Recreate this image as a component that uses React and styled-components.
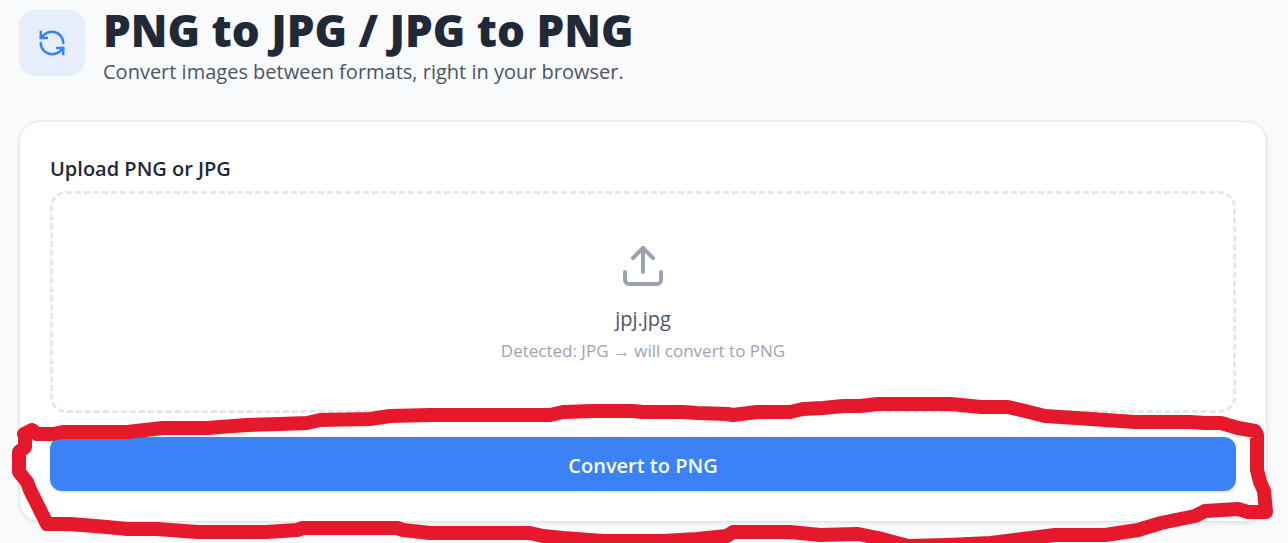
import React, { useState } from 'react'
import styled, { createGlobalStyle } from 'styled-components'
import { RefreshCcw, Upload } from 'lucide-react'

const GlobalStyle = createGlobalStyle`
    * {
        box-sizing: border-box;
    }
    body {
        margin: 0;
        background-color: #f9fafc;
        color: #1f2937;
        font-family: 'Segoe UI', 'Open Sans', 'Noto Sans', sans-serif;
        font-size: 20px;
        line-height: 32px;
    }
`
const Page = styled.main`
    position: relative;
    overflow: hidden;
    padding: 10px 21px 21px 19px;
`
const Header = styled.header`
    display: flex;
    align-items: flex-start;
    gap: 18px;
    margin-bottom: 33px;
`
const IconTile = styled.div`
    display: flex;
    align-items: center;
    justify-content: center;
    flex: none;
    width: 66px;
    height: 66px;
    border-radius: 16px;
    background-color: #e6eefb;
    color: #3b82f6;
`
const Title = styled.h1`
    margin: 0 0 6px;
    font-family: 'Segoe UI', 'Noto Sans', 'Open Sans', sans-serif;
    font-size: 44px;
    font-weight: 900;
    line-height: 40px;
`
const Subtitle = styled.p`
    margin: 0;
    color: #4b5563;
`
const Card = styled.section`
    display: flex;
    flex-direction: column;
    padding: 31px 30px 30px;
    border: 1px solid #e5e7eb;
    border-radius: 21px;
    background-color: #fff;
    box-shadow: 0 1px 4px rgba(0, 0, 0, 0.1);
`
const FieldLabel = styled.label`
    margin-bottom: 6px;
    font-weight: 600;
`
const DropZone = styled.label`
    display: flex;
    flex-direction: column;
    align-items: center;
    margin-bottom: 24px;
    padding: 48px 24px 43px;
    border: 3px dashed #e5e7eb;
    border-radius: 16px;
    cursor: pointer;
    svg {
        margin-bottom: 13px;
        color: #9ca3af;
    }
`
const FileInput = styled.input`
    position: absolute;
    width: 1px;
    height: 1px;
    opacity: 0;
`
const FileName = styled.span`
    color: #4b5563;
`
const Hint = styled.span`
    color: #9ca3af;
    font-size: 17px;
`
const ConvertButton = styled.button`
    height: 54px;
    padding: 4px 24px 0;
    border: 0;
    border-radius: 12px;
    background-color: #3b82f6;
    color: #fff;
    font: inherit;
    font-weight: 600;
    box-shadow: 0 1px 3px rgba(0, 0, 0, 0.15);
    cursor: pointer;
`
const Marker = styled.svg`
    position: absolute;
    top: 0;
    left: 0;
    width: 100%;
    height: 100%;
    pointer-events: none;
`

const markerPoints = `25,436 24,434 32,430 37,434 53,434 63,432 127,432 163,428 207,428 247,425 280,424
    307,423 320,420 370,419 390,416 430,415 550,415 563,412 593,411 633,411 643,412 683,412
    697,413 727,414 733,415 757,412 790,412 803,409 823,408 843,406 860,406 878,404 951,404
    971,406 981,407 1008,407 1025,411 1045,416 1091,419 1135,422 1191,422 1205,423 1221,423
    1238,428 1255,431 1257,435 1257,470 1260,482 1264,491 1266,512 1248,512 1238,509 1205,511
    1195,516 1161,523 1138,530 1105,535 1055,535 991,543 948,545 908,546 878,538 858,534
    820,535 790,532 733,532 727,536 697,539 663,541 603,541 563,538 543,536 530,533 430,533
    403,530 397,528 303,528 297,530 267,532 197,532 157,529 127,529 107,527 70,524 47,524
    40,510 30,490 27,482 19,472 19,452 25,447 25,436`

const App = () => {

    const [fileName, setFileName] = useState('jpj.jpg')

    const isPng = fileName.toLowerCase().endsWith('.png')
    const source = isPng ? 'PNG' : 'JPG'
    const target = isPng ? 'JPG' : 'PNG'

    return (
        <>
            <GlobalStyle />
            <Page>
                <Header>
                    <IconTile>
                        <RefreshCcw size={30} />
                    </IconTile>
                    <div>
                        <Title>PNG to JPG / JPG to PNG</Title>
                        <Subtitle>Convert images between formats, right in your browser.</Subtitle>
                    </div>
                </Header>
                <Card>
                    <FieldLabel htmlFor='image'>Upload PNG or JPG</FieldLabel>
                    <DropZone htmlFor='image'>
                        <FileInput
                            id='image'
                            type='file'
                            accept='image/png,image/jpeg'
                            onChange={(e) => e.target.files[0] && setFileName(e.target.files[0].name)}
                        />
                        <Upload size={48} />
                        <FileName>{fileName}</FileName>
                        <Hint>{`Detected: ${source} → will convert to ${target}`}</Hint>
                    </DropZone>
                    <ConvertButton type='button'>{`Convert to ${target}`}</ConvertButton>
                </Card>
                {/* red marker drawn around the button */}
                <Marker aria-hidden='true'>
                    <polyline
                        points={markerPoints}
                        fill='none'
                        stroke='#e5192b'
                        strokeWidth='14'
                        strokeLinecap='round'
                        strokeLinejoin='round'
                    />
                </Marker>
            </Page>
        </>
    )
}

export default App
